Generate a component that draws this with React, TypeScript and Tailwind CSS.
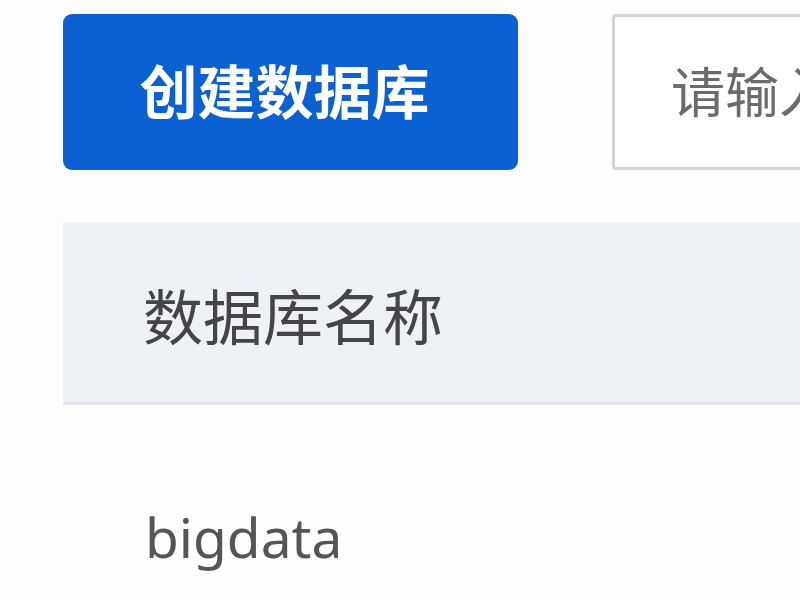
import React from 'react';

const font = { fontFamily: '"Noto Sans", "Noto Sans CJK SC", sans-serif' };

export default function App() {
  return (
    <div className="w-[800px] h-[600px] overflow-hidden bg-[#fdfdfd]" style={font}>
      <div className="flex items-stretch gap-[94px] pl-[63px] pt-[14px] w-[1400px]">
        <button className="w-[455px] h-[156px] shrink-0 rounded-[9px] bg-[#0b61d1] text-white text-[58px] font-bold flex items-center justify-center pr-[12px] leading-none">
          创建数据库
        </button>
        <div className="w-[500px] h-[156px] shrink-0 border-[3px] border-[#d4d4d4] rounded-[4px] bg-white flex items-center pl-[56px]">
          <span className="text-[54px] text-[#6b6b6b] leading-none whitespace-nowrap">请输入数据库名称</span>
        </div>
      </div>

      <div className="ml-[63px] mt-[52px]">
        <div className="h-[183px] bg-[#eef1f5] border-b-[3px] border-[#e4e7eb] flex items-center pl-[80px] pt-[10px]">
          <span className="text-[60px] text-[#454545] leading-none">数据库名称</span>
        </div>
        <div className="h-[262px] flex items-center pl-[82px]">
          <span className="text-[55px] text-[#555] leading-none">bigdata</span>
        </div>
      </div>
    </div>
  );
}
